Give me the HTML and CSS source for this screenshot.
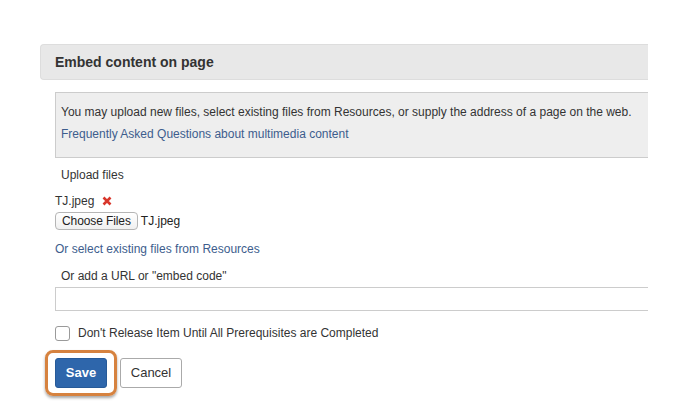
FILE: index.html
```html
<!DOCTYPE html>
<html>
<head>
<meta charset="utf-8">
<link rel="stylesheet" href="styles.css">
</head>
<body>
<div class="page">
  <div class="header">Embed content on page</div>
  <div class="content">
    <div class="info">
      <div class="info-line">You may upload new files, select existing files from Resources, or supply the address of a page on the web.</div>
      <div class="info-line"><a class="link" href="#">Frequently Asked Questions about multimedia content</a></div>
    </div>
    <div class="label">Upload files</div>
    <div class="file-row">TJ.jpeg <svg class="remove" width="10" height="10" viewBox="0 0 10 10"><path d="M1.5 1.5 L8.5 8.5 M8.5 1.5 L1.5 8.5" stroke="#d8362b" stroke-width="2.6" stroke-linecap="butt"/></svg></div>
    <div class="choose-row"><span class="choose-btn">Choose Files</span><span class="chosen">TJ.jpeg</span></div>
    <div class="res-row"><a class="link" href="#">Or select existing files from Resources</a></div>
    <div class="label url-label">Or add a URL or "embed code"</div>
    <div class="url-input"></div>
    <div class="check-row"><span class="checkbox"></span><span>Don't Release Item Until All Prerequisites are Completed</span></div>
    <div class="actions">
      <span class="btn save">Save</span>
      <span class="btn cancel">Cancel</span>
    </div>
  </div>
</div>
</body>
</html>
```

FILE: styles.css
```css
html, body {
  margin: 0;
  padding: 0;
  background: #ffffff;
}
body {
  font-family: "Liberation Sans", Arial, Helvetica, sans-serif;
  font-size: 12px;
  color: #333333;
  width: 697px;
  height: 413px;
  overflow: hidden;
}
.page {
  padding: 44px 0 0 40px;
  width: 608px;
}
.header {
  height: 34px;
  line-height: 34px;
  background: #e8e8e8;
  border: 1px solid #dddddd;
  border-right: none;
  border-radius: 4px 0 0 4px;
  padding-left: 14px;
  font-weight: bold;
  font-size: 14px;
  color: #333333;
}
.content {
  padding-left: 15px;
}
.info {
  margin-top: 12px;
  background: #eeeeee;
  border: 1px solid #cccccc;
  border-right: none;
  padding: 8px 0 0 5px;
  box-sizing: border-box;
  height: 66px;
}
.info-line {
  line-height: 22px;
}
.link {
  color: #3d5d8d;
  text-decoration: none;
}
.label {
  margin-top: 7px;
  line-height: 20px;
  padding-left: 6px;
}
.file-row {
  margin-top: 7px;
  line-height: 18px;
  height: 18px;
  display: flex;
  align-items: center;
  gap: 8px;
}
.remove {
  display: block;
}
.choose-row {
  margin-top: 2px;
  display: flex;
  align-items: center;
  gap: 3px;
  height: 18px;
}
.choose-btn {
  height: 16px;
  line-height: 16px;
  padding: 0 6px;
  border: 1px solid #b5b5b5;
  border-radius: 4px;
  background: linear-gradient(#ffffff, #f0f0f0);
  font-size: 12px;
  letter-spacing: -0.1px;
  color: #222;
}
.chosen {
  color: #222;
}
.res-row {
  margin-top: 10px;
  line-height: 18px;
}
.url-label {
  margin-top: 9px;
  line-height: 18px;
}
.url-input {
  margin-top: 2px;
  height: 22px;
  border: 1px solid #cccccc;
  border-right: none;
  background: #ffffff;
}
.check-row {
  margin-top: 14px;
  display: flex;
  align-items: center;
  gap: 8px;
  height: 16px;
  color: #333;
}
.checkbox {
  width: 13px;
  height: 13px;
  border: 1px solid #9a9a9a;
  border-radius: 3px;
  background: #ffffff;
}
.actions {
  margin-top: 17px;
  display: flex;
  gap: 13px;
}
.btn {
  height: 28px;
  line-height: 28px;
  border-radius: 3px;
  font-size: 13px;
  text-align: center;
  box-sizing: content-box;
}
.save {
  position: relative;
  width: 50px;
  background: #2e66ab;
  border: 1px solid #275a98;
  color: #ffffff;
  font-weight: bold;
}
.save::after {
  content: "";
  position: absolute;
  left: -11px;
  top: -9px;
  right: -11px;
  bottom: -9px;
  border: 3px solid #d6823f;
  border-radius: 8px;
  box-shadow: 0 2px 3px rgba(0, 0, 0, 0.35);
}
.cancel {
  width: 60px;
  background: #ffffff;
  border: 1px solid #aaaaaa;
  color: #333333;
}
```
